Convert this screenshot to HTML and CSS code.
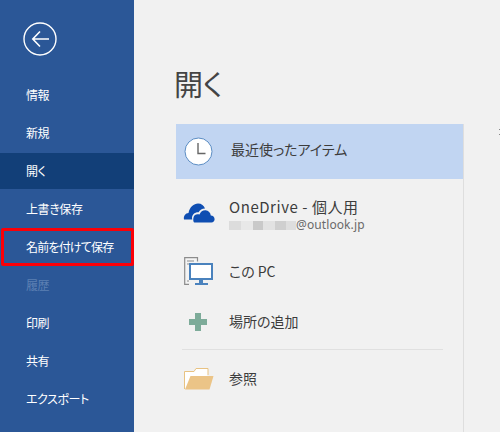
FILE: index.html
```html
<!DOCTYPE html>
<html lang="ja">
<head>
<meta charset="utf-8">
<title>開く</title>
<link rel="stylesheet" href="styles.css">
</head>
<body>
<div class="app">
  <nav class="side">
    <div class="back">
      <svg width="36" height="36" viewBox="0 0 36 36"><circle cx="17" cy="17" r="16" fill="none" stroke="#fff" stroke-width="1.4"/><path d="M10 17H26M17 9.5 9.8 17 17 24.5" fill="none" stroke="#fff" stroke-width="1.6"/></svg>
    </div>
    <ul class="menu">
      <li class="item">情報</li>
      <li class="item">新規</li>
      <li class="item active">開く</li>
      <li class="item">上書き保存</li>
      <li class="item marked">名前を付けて保存</li>
      <li class="item disabled">履歴</li>
      <li class="item">印刷</li>
      <li class="item">共有</li>
      <li class="item">エクスポート</li>
    </ul>
  </nav>
  <main class="main">
    <h1 class="title">開く</h1>
    <div class="panel">
      <div class="place recent">
        <svg class="icon" width="30" height="30" viewBox="0 0 30 30"><circle cx="14.5" cy="14.5" r="13.5" fill="#fff" stroke="#5b8dc4" stroke-width="1"/><path d="M14 6V16.5H21.5" fill="none" stroke="#666" stroke-width="1.4"/></svg>
        <span class="label recent-label">最近使ったアイテム</span>
      </div>
      <div class="place drive">
        <svg class="icon" width="32" height="22" viewBox="0 0 32 22"><path d="M1 17.5C.3 14 2.5 11.2 5.5 11 6.5 5 11 1.5 15 1.5 18.5 1.5 21 3.5 22 6.5 19 6.5 16.8 8 15.6 10.2 12.5 9.8 9.2 12 9 15.5 9 16.3 9.1 17 9.3 17.5Z" fill="#0f4eb2"/><path d="M11.5 20.5C9.8 20.5 9.8 14.5 12 13 13.2 12 15 12 16.5 12.5 17.5 9.8 19.8 8.2 22.5 8.3 25.5 8.5 27.5 10.8 27.8 13.5 30 13.5 31.6 15.2 31.6 17.3 31.6 19.2 30.2 20.5 28.5 20.5Z" fill="#0f4eb2"/></svg>
        <div class="stack">
          <span class="label wide">OneDrive - 個人用</span>
          <span class="account"><span class="mask"><i class="m1"></i><i class="m2"></i><i class="m3"></i><i class="m4"></i><i class="m5"></i><i class="m6"></i></span>@outlook.jp</span>
        </div>
      </div>
      <div class="place pc">
        <svg class="icon" width="30" height="30" viewBox="0 0 30 30"><path d="M13.5 4.5V.7H.7V27.3H5" fill="#f4f4f4" stroke="#8c8c8c" stroke-width="1.2"/><path d="M3 4H10M3 7H8M3 24H5" stroke="#8c8c8c" stroke-width="1.2"/><rect x="6" y="7" width="22" height="15" fill="#fff" stroke="#4a82bd" stroke-width="2"/><path d="M15 23h4v3h-4zM11 26h13v2H11z" fill="#4a82bd"/></svg>
        <span class="label pc-label">この PC</span>
      </div>
      <div class="place add">
        <svg class="icon" width="30" height="30" viewBox="0 0 30 30"><path d="M11 6h6v6h6v6h-6v6h-6v-6H5v-6h6z" fill="#7dab99"/></svg>
        <span class="label">場所の追加</span>
      </div>
      <div class="rule"></div>
      <div class="place browse">
        <svg class="icon" width="30" height="22" viewBox="0 0 30 22"><path d="M.5 21V3.5H10L12 .5H24V7" fill="#fff" stroke="#e8c282" stroke-width="1"/><path d="M1 21.5 6.5 8H29.5L25.5 21.5Z" fill="#ebc487"/></svg>
        <span class="label">参照</span>
      </div>
    </div>
    <div class="edge-dots"></div>
  </main>
</div>
</body>
</html>
```

FILE: styles.css
```css
* { box-sizing: border-box; }
html, body { margin: 0; height: 100%; }
body {
  background: #f1f1f1;
  overflow: hidden;
  font-family: "Noto Sans CJK JP", "Liberation Sans", sans-serif;
  font-feature-settings: "palt";
}
.app { display: flex; height: 432px; }

.side { width: 134px; flex: none; background: #2b5797; color: #fff; }
.back { padding: 22px 0 0 23px; height: 77px; }
.back svg { display: block; }
.menu { list-style: none; margin: 0; padding: 0; display: flex; flex-direction: column; gap: 2px; }
.item { height: 36px; line-height: 36px; padding-left: 26px; font-size: 12px; letter-spacing: -.4px; }
.active { background: #123f78; }
.disabled { color: #5d80b3; }
.marked { margin: -1px 0 -1px 1px; height: 38px; line-height: 32px; padding-left: 22px; border: 3px solid #fb0007; border-radius: 2px; letter-spacing: -.8px; }

.main { flex: 1; padding-left: 42px; position: relative; }
.title { margin: 0 0 0 -2px; height: 124px; padding-top: 61px; font-size: 29px; line-height: 44px; font-weight: 400; color: #444; }
.panel { width: 288px; height: 308px; border-right: 1px solid #dedede; display: flex; flex-direction: column; }
.place { display: flex; align-items: center; padding-left: 8px; color: #3c3c3c; }
.icon { display: block; flex: none; }
.label { font-size: 14px; line-height: 20px; margin-left: 15px; padding-bottom: 2px; }
.wide { font-size: 15px; letter-spacing: .55px; padding-bottom: 0; }
.recent { height: 55px; background: #c1d5f2; }
.recent-label { margin-left: 17px; padding-bottom: 6px; }
.drive { height: 68px; }
.drive .icon { margin: 0 -1px 0 -1px; }
.stack { display: flex; flex-direction: column; margin-top: 3px; }
.account { font-size: 12px; line-height: 16px; margin-left: 15px; color: #6a6a6a; display: flex; font-family: "Noto Sans", sans-serif; letter-spacing: .1px; }
.mask { display: flex; height: 9px; margin-top: 4px; width: 67px; filter: blur(.6px); }
.mask i { display: block; }
.m1 { width: 12px; background: #dcdcdc; }
.m2 { width: 12px; background: #e8e8e8; }
.m3 { width: 10px; background: #c9c9c9; }
.m4 { width: 12px; background: #e2e2e2; }
.m5 { width: 11px; background: #cfcfcf; }
.m6 { width: 10px; background: #dedede; }
.pc { height: 50px; }
.add { height: 50px; }
.rule { height: 1px; background: #e0e0e0; margin: 2px 20px 0 6px; }
.browse { height: 57px; }
.edge-dots { position: absolute; right: 0; top: 129px; width: 1px; height: 7px; background: linear-gradient(#888 0 1px, transparent 1px 5px, #888 5px 6px, transparent 6px); }
```
